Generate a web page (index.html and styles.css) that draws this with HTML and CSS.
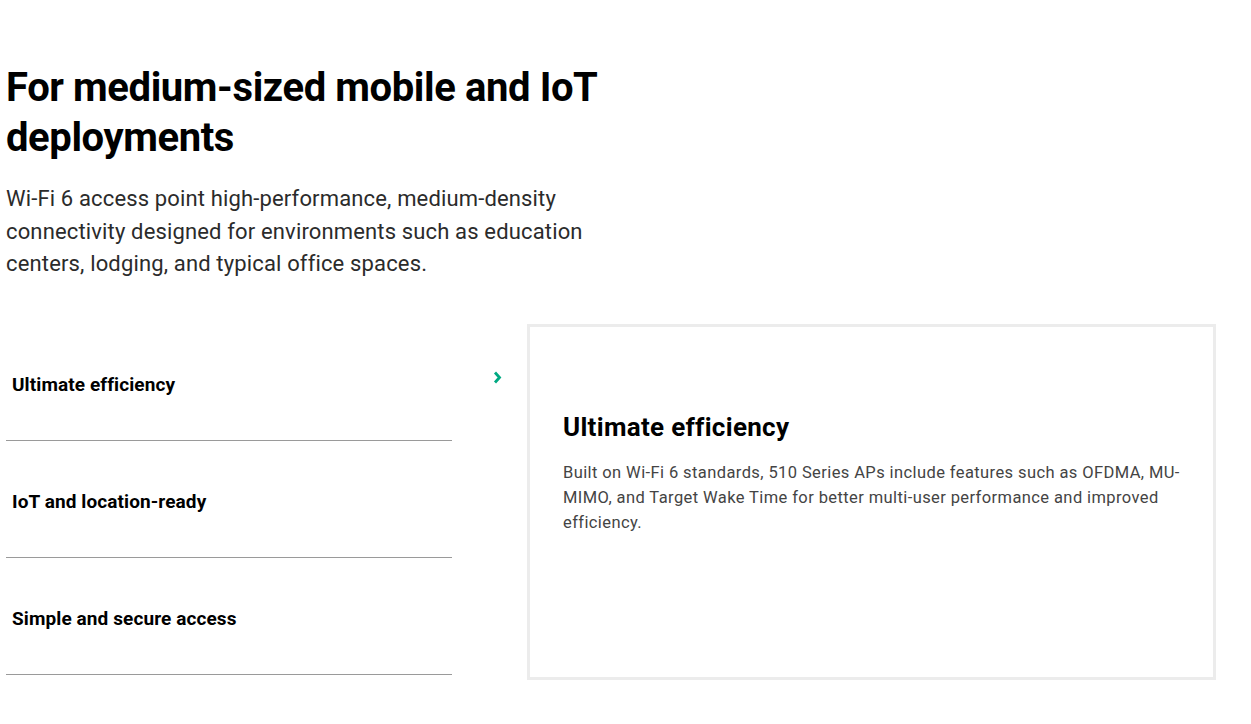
FILE: index.html
```html
<!DOCTYPE html>
<html lang="en">
<head>
<meta charset="utf-8">
<title>510 Series</title>
<link rel="stylesheet" href="styles.css">
</head>
<body>
<main class="page">
  <section class="intro">
    <h1 class="intro-title">For medium-sized mobile and IoT deployments</h1>
    <p class="intro-text">Wi-Fi 6 access point high-performance, medium-density connectivity designed for environments such as education centers, lodging, and typical office spaces.</p>
  </section>
  <section class="features">
    <div class="tabs">
      <div class="tab tab-active">
        <div class="tab-label">Ultimate efficiency</div>
        <span class="tab-arrow"><svg width="9" height="13" viewBox="0 0 9 13"><path d="M2 1.5 L6.5 6.5 L2 11.5" fill="none" stroke="#01a982" stroke-width="2.8"/></svg></span>
      </div>
      <div class="tab">
        <div class="tab-label">IoT and location-ready</div>
      </div>
      <div class="tab">
        <div class="tab-label">Simple and secure access</div>
      </div>
    </div>
    <article class="card">
      <h2 class="card-title">Ultimate efficiency</h2>
      <p class="card-text">Built on Wi-Fi 6 standards, 510 Series APs include features such as OFDMA, MU-MIMO, and Target Wake Time for better multi-user performance and improved efficiency.</p>
    </article>
  </section>
</main>
</body>
</html>
```

FILE: styles.css
```css
* { box-sizing: border-box; }
html, body { margin: 0; padding: 0; background: #fff; }
body { font-family: Roboto, "Liberation Sans", sans-serif; color: #000; }

.page { padding: 63px 0 0 6px; }

.intro { width: 620px; }
.intro-title {
  margin: 0;
  font-size: 40px;
  line-height: 50px;
  font-weight: 700;
  letter-spacing: -0.4px;
  color: #000;
}
.intro-text {
  margin: 20px 0 0;
  font-size: 22px;
  line-height: 32.5px;
  color: #2b2b2b;
  letter-spacing: 0.15px;
  width: 610px;
}

.features {
  display: flex;
  align-items: flex-start;
  margin-top: 43px;
}
.tabs { width: 521px; flex: none; }
.tab { display: flex; align-items: center; }
.tab-label {
  width: 446px;
  height: 117px;
  border-bottom: 1px solid #9a9a9a;
  display: flex;
  align-items: center;
  padding: 5px 0 0 6px;
  font-size: 19px;
  font-weight: 700;
  letter-spacing: 0.1px;
  color: #000;
}
.tab-arrow { margin-left: 41px; margin-top: -10px; display: flex; }

.card {
  width: 689px;
  height: 356px;
  border: 3px solid #ececec;
  padding: 83px 33px 0 33px;
}
.card-title {
  margin: 0;
  font-size: 26px;
  line-height: 34px;
  font-weight: 700;
  color: #000;
  letter-spacing: 0.3px;
}
.card-text {
  margin: 16px 0 0;
  font-size: 16.5px;
  line-height: 25px;
  color: #444;
  letter-spacing: 0.4px;
}
```
